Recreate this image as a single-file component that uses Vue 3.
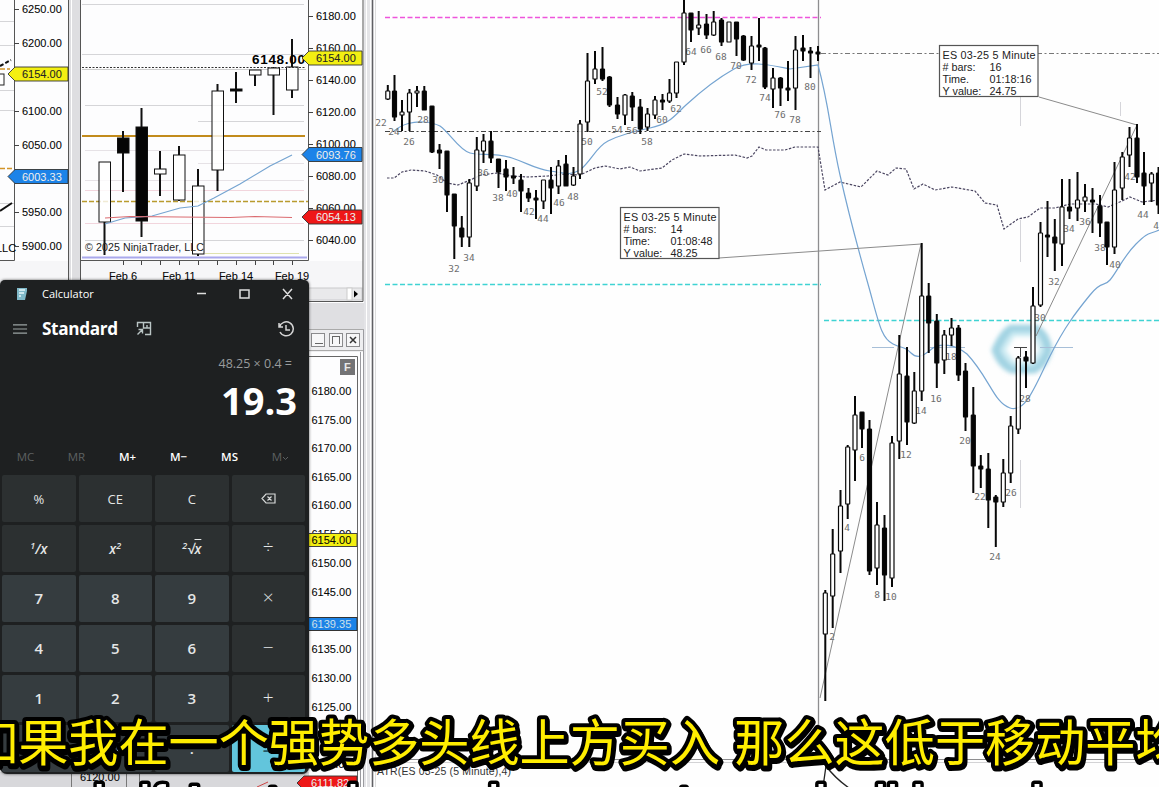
<script setup>
// x, high, body top, body bottom, low, filled
const candles = [
  [387.8,85,91,99,100,0],[394.5,75,91,117,121,1],[402,100,112,115,131,0],[409.5,89,93,112,131,0],[417,86,91,93,107,0],
  [424.3,86,91,110,110,1],[432,106,106,152,153,1],[439.5,144,150,153,169,1],[447,151,151,195,212,1],[454.3,194,194,226,259,1],
  [461.8,216,228,237,247,1],[469.3,179,183,237,247,0],[476.8,137,150,186,191,0],[483.5,134,141,151,163,0],[491,131,141,158,163,1],
  [498.5,159,159,172,188,1],[506,160,169,177,191,1],[513.5,167,176,178,184,1],[521,174,180,191,212,1],[528.5,188,193,198,202,1],
  [536,190,198,200,219,1],[543.5,180,180,201,209,0],[551,167,180,188,214,1],[558.5,160,166,186,194,0],[566,155,164,186,186,1],
  [573.5,167,176,185,186,0],[580,120,124,174,179,0],[587.5,53,81,122,132,0],[595,51,69,79,84,0],[602.5,47,69,79,81,1],
  [609.5,76,77,105,107,1],[617.5,97,105,114,119,1],[625,94,95,115,125,0],[632.3,92,96,107,121,1],[640.3,99,107,129,134,1],
  [647.5,108,114,127,131,0],[655,96,100,115,119,0],[662.5,94,100,102,110,1],[669.5,79,93,101,103,0],[676.5,62,62,93,98,0],
  [684,0,13,62,65,0],[691,13,13,30,42,1],[698.7,11,25,28,35,0],[706.5,14,24,35,39,1],[713.7,11,22,35,36,0],
  [721.5,18,20,42,46,1],[729,22,22,42,42,0],[736.5,22,22,39,56,1],[743.5,35,36,60,61,1],[751.5,36,46,63,70,0],
  [759,18,45,47,61,1],[765,47,48,87,89,1],[773,68,78,89,108,0],[780.5,77,78,88,106,1],[788,61,88,90,101,1],
  [795.5,36,50,88,110,0],[803,35,48,51,61,1],[810.5,47,51,53,78,1],[818,46,52,54,61,1],
  [825.3,590,593,634,701,0],[832.7,529,554,596,628,0],[840.5,490,506,551,573,0],[847.7,445,447,504,519,0],[855,396,415,450,481,0],
  [862,412,412,429,448,1],[869.5,420,429,571,575,1],[877,502,525,568,585,0],[884.5,515,528,575,601,1],[892,436,443,578,587,0],
  [899.3,335,374,441,459,0],[907,347,376,422,445,1],[914.3,372,391,423,424,0],[921.7,243,296,391,401,0],[928.7,283,296,323,353,1],
  [936.8,314,321,363,388,1],[944.3,330,335,360,374,0],[951.5,318,328,335,346,0],[958.5,325,328,375,381,1],[965.5,363,371,417,431,1],
  [973.3,387,415,466,493,1],[980.8,455,466,469,488,1],[988.3,453,469,500,528,1],[995.8,495,497,502,547,1],[1003.3,459,473,502,507,0],
  [1010.7,416,426,473,483,0],[1018.3,356,358,429,434,0],[1026,351,357,361,388,1],[1033,287,306,363,364,0],[1040.5,222,233,305,307,0],
  [1047.5,201,235,237,257,1],[1054.8,219,237,243,271,1],[1062,179,207,244,266,0],[1069.5,179,207,211,219,1],[1077.5,172,200,208,221,0],
  [1085,184,197,201,212,0],[1092.5,188,200,202,233,1],[1100,195,206,223,237,1],[1107,222,222,247,265,1],[1114.5,162,190,247,254,0],
  [1122.3,152,157,188,200,0],[1129.5,127,138,155,167,0],[1137,124,138,177,183,1],[1144,152,173,186,205,1],[1151.5,172,174,183,202,0],
  [1158.5,167,173,205,214,1],
]

// bar number, x, baseline
const barLabels = [
  [22,381,126],[24,394,135],[26,409,145],[28,423,123],[30,438,183],[32,454,272],[34,469,261],[36,483,176],[38,498,201],[40,512,197],
  [42,529,215],[44,543,222],[46,559,206],[48,573,200],[50,587,145],[52,602,95],[54,617,133],[56,632,134],[58,647,145],[60,662,123],
  [62,676,112],[64,691,55],[66,706,53],[68,721,60],[70,736,69],[72,751,83],[74,765,101],[76,780,118],[78,795,123],[80,810,90],
  [2,832,640],[4,847,531],[6,862,461],[8,877,598],[10,891,600],[12,906,458],[14,921,414],[16,936,402],[18,951,360],[20,965,444],
  [22,980,500],[24,995,560],[26,1011,496],[28,1025,402],[30,1040,321],[32,1054,285],[34,1069,232],[36,1085,225],[38,1100,251],[40,1115,268],
  [42,1130,180],[44,1143,218],[46,1159,229],
]

const daily = [
  [104.5,162,162,222,255,0],[123,131,138,153,192,1],[141.5,108,127,221,237,1],[160,151,169,174,196,0],[179,146,155,200,201,0],
  [198,169,186,254,256,0],[217.5,84,91,170,191,0],[236,72,89,91,103,1],[255,70,70,75,86,0],[273.5,67,68,75,115,0],[292,39,67,90,98,0],
]

const axisLeft = [['6250.00',9],['6200.00',43],['6100.00',111],['6050.00',145],['5950.00',212],['5900.00',246]]
const axisMid = [['6180.00',16],['6160.00',48],['6140.00',80],['6120.00',112],['6100.00',144],['6080.00',176],['6060.00',208],['6040.00',240]]
const axisLow = [['6180.00',391],['6175.00',420],['6170.00',448],['6165.00',477],['6160.00',505],['6155.00',534],['6150.00',563],['6145.00',592],['6135.00',649],['6130.00',678],['6125.00',707],['6120.00',735],['6115.00',764]]
const dates = [['Feb 6',123],['Feb 11',179],['Feb 14',236],['Feb 19',292]]

const tags = [
  { x: 8, y: 74, w: 60, t: '6154.00', bg: '#f3ef12', fg: '#222' },
  { x: 8, y: 176.5, w: 60, t: '6003.33', bg: '#1c83e8', fg: '#fff' },
  { x: 302, y: 58, w: 60, t: '6154.00', bg: '#f3ef12', fg: '#222' },
  { x: 302, y: 154.5, w: 60, t: '6093.76', bg: '#1c83e8', fg: '#fff' },
  { x: 302, y: 217, w: 60, t: '6054.13', bg: '#ee1717', fg: '#fff' },
  { x: 297, y: 783, w: 60, t: '6111.82', bg: '#ee1717', fg: '#fff' },
]
const tagShape = (g) => `M${g.x} ${g.y}L${g.x + 7} ${g.y - 7}H${g.x + g.w}V${g.y + 7}H${g.x + 7}Z`

const notes = [
  { x: 620.5, y: 207.5, h: 51, rows: [['# bars:', '14'], ['Time:', '01:08:48'], ['Y value:', '48.25']] },
  { x: 939.5, y: 45.5, h: 51, rows: [['# bars:', '16'], ['Time.', '01:18:16'], ['Y value:', '24.75']] },
]

const memory = [['MC', 0], ['MR', 0], ['M+', 1], ['M−', 1], ['MS', 1], ['M﹀', 0]]
const keys = [
  ['%','fn'],['CE','fn'],['C','fn'],['back','fn'],
  ['recip','fn'],['sq','fn'],['root','fn'],['÷','fn op'],
  ['7','num'],['8','num'],['9','num'],['×','fn op'],
  ['4','num'],['5','num'],['6','num'],['−','fn op'],
  ['1','num'],['2','num'],['3','num'],['+','fn op'],
  ['','num'],['0','num'],['.','num'],['=','eq'],
]

// second caption line, running past the lower edge
const caption = [['again',4],['if',139],['I',187],['set',209],['buy',347],['above',458],['a',621],['strong',650],['bull',815],['bars',912],['be',1031]]
</script>

<template>
  <main class="desk">
    <section class="left">
      <svg class="pane" viewBox="0 0 370 787">
        <rect width="370" height="787" fill="#fdfdfe" />
        <rect y="261" width="363" height="40" fill="#f6f6f8" />
        <g stroke="#d5d5d8">
          <path d="M0 21.5H14M0 45.5H14M0 90.5H14M0 110.5H14M0 203.5H14M0 226.5H14M82 4.5H304M82 54.5H304M85 105.5H304M198 121.5H304M85 240.5H304" />
          <path d="M85 150.500H304M198 163.500H304M85 180.500H304" stroke="#e6e2e6" />
          <path d="M85 190.500H304M85 223.500H304" stroke="#f2d5dd" />
          <path d="M205 253.500H299" stroke="#dfe2ae" />
        </g>
        <path d="M82 257.500H307" stroke="#a9a8ec" stroke-width="2" />
        <path d="M14.500 0V260.500H0M308.500 0V260.500H80" stroke="#555" fill="none" />
        <rect x="69" y="0" width="11" height="281" fill="#dedee1" />
        <path d="M68.500 0V281M80.500 0V281" stroke="#555" />
        <path d="M71.500 0V281" stroke="#fff" />
        <path d="M0 66L11 60" stroke="#111" stroke-width="2" stroke-dasharray="4 2" />
        <path d="M0 69H10M0 168.500H12" stroke="#d29428" stroke-width="1.500" stroke-dasharray="5 2" />
        <rect x="-3" y="74" width="7" height="11" fill="#fff" stroke="#222" />
        <path d="M0 211L12 203" stroke="#111" stroke-width="2" />
        <text x="-4" y="252" class="price">LLC</text>

        <path d="M82 136H305" stroke="#c28b1c" stroke-width="2" />
        <path d="M82 201.500H308" stroke="#b99b2e" stroke-width="1.500" stroke-dasharray="5 2" />
        <path d="M82 69.500H306" stroke="#ccc" />
        <g v-for="c in daily" :key="c[0]">
          <path :d="`M${c[0]} ${c[1]}V${c[2]}M${c[0]} ${c[3]}V${c[4]}`" stroke="#111" stroke-width="2" />
          <rect :x="c[0] - 5.500" :y="c[2]" width="11.500" :height="Math.max(c[3] - c[2], 1)" :fill="c[5] ? '#050505' : '#fff'" :fill-opacity="c[5] ? 1 : .8" stroke="#111" />
        </g>
        <path d="M82 67.500H306" stroke="#333" stroke-dasharray="2 1.500" />
        <text x="85" y="251" class="copy" textLength="119">© 2025 NinjaTrader, LLC</text>
        <path d="M105 224L125 218 152 216 180 208 198 206 214 198 240 184 270 166 292 155" class="ma" />
        <path d="M105 218L130 216.500 230 217.500 255 216.500 292 217.500" fill="none" stroke="#db6b70" stroke-width="1.200" />
        <text x="252" y="64" class="last" textLength="53">6148.00</text>

        <g v-for="a in axisLeft" :key="'l' + a[0]">
          <path :d="`M14 ${a[1]}.5h5`" stroke="#444" />
          <text x="22" :y="a[1] + 4" class="price">{{ a[0] }}</text>
        </g>
        <g v-for="a in axisMid" :key="'m' + a[0]">
          <path :d="`M308 ${a[1]}.5h5`" stroke="#444" />
          <text x="316" :y="a[1] + 4" class="price">{{ a[0] }}</text>
        </g>
        <path d="M123.500 261v4M141.500 261v4M160.500 261v4M179.500 261v4M198.500 261v4M217.500 261v4M236.500 261v4M255.500 261v4M273.500 261v4M292.500 261v4" stroke="#444" />
        <text v-for="d in dates" :key="d[0]" :x="d[1]" y="280" text-anchor="middle" class="price">{{ d[0] }}</text>

        <rect x="300" y="288" width="62" height="12" fill="#e9e9eb" stroke="#c9c9cc" />
        <rect x="347" y="288" width="5" height="12" fill="#fff" stroke="#ccc" />
        <path d="M354 290.500l4 3.500-4 3.500z" fill="#000" />
        <path d="M300 301.500H363V0" fill="none" stroke="#555" />
        <rect x="300" y="303" width="70" height="27" fill="#dfdfe2" />
        <rect x="364" y="0" width="6" height="787" fill="#e4e4e7" />
        <path d="M366.500 0V787" stroke="#fff" />
        <rect x="300" y="330" width="63" height="22" fill="#eeeef0" />
        <path d="M300 329.500H364M300 350.500H364" stroke="#aaa" />
        <g fill="#f7f7f8" stroke="#8b8b8d">
          <rect x="311.500" y="333.500" width="13" height="13" /><rect x="329.500" y="333.500" width="13" height="13" /><rect x="346.500" y="333.500" width="13" height="13" />
        </g>
        <path d="M315 343.500h8M332 336.500h8M332.500 336v8M339.500 336v8" stroke="#666" />
        <path d="M350 337l6 6M356 337l-6 6" stroke="#333" stroke-width="1.500" />
        <path d="M300 356.500H357.500V787" fill="none" stroke="#666" />
        <path d="M360.500 352V787M363.500 330V787" stroke="#9b9ba0" />
        <rect x="340" y="359" width="15" height="16" fill="#737375" /><text x="344" y="371" class="fbtn">F</text>
        <text v-for="a in axisLow" :key="'b' + a[0]" x="311.500" :y="a[1] + 4" class="price">{{ a[0] }}</text>
        <rect x="305" y="533.500" width="52" height="13" fill="#f3ef12" stroke="#444" /><text x="311.500" y="544" class="price">6154.00</text>
        <rect x="305" y="617.500" width="52" height="13" fill="#1c83e8" stroke="#333" /><text x="311.500" y="628" class="price pale">6139.35</text>

        <rect y="772" width="309" height="15" fill="#d8d8db" />
        <path d="M71.500 774V787M126.500 774V787M139.500 774V787" stroke="#777" />
        <text x="80" y="781" class="price">6120.00</text>
        <path d="M257 787L268 782" stroke="#c44" />
        <g v-for="g in tags" :key="g.x + '-' + g.y">
          <path :d="tagShape(g)" :fill="g.bg" stroke="#333" stroke-width=".9" />
          <text :x="g.x + 14" :y="g.y + 4" class="price" :fill="g.fg">{{ g.t }}</text>
        </g>
      </svg>
    </section>

    <section class="right">
      <svg class="pane" viewBox="370 0 789 787">
        <defs><filter id="soft" x="-20%" y="-20%" width="140%" height="140%"><feGaussianBlur stdDeviation="2" /></filter></defs>
        <rect x="370" width="789" height="787" fill="#fefefe" />
        <path d="M372.500 0V787" stroke="#606064" stroke-width="1.600" /><path d="M375.500 0V787" stroke="#ddd" />
        <path d="M818.500 0V760" stroke="#8e8e90" stroke-width="1.300" />
        <path d="M373 759.500H1159" stroke="#8e8e90" /><path d="M373 762.500H1159" stroke="#d3d3d5" />
        <path d="M385 17.500H821" stroke="#ee55dc" stroke-width="1.400" stroke-dasharray="5 2.500" />
        <path d="M385 131.500H821" stroke="#444" stroke-width="1.200" stroke-dasharray="5 2.500 2 2.500" />
        <path d="M385 284.500H821M824 320.500H1159" stroke="#3fd3d3" stroke-width="1.400" stroke-dasharray="5 2.500" />
        <path d="M821 53.500H1159" stroke="#777" stroke-width="1.200" stroke-dasharray="5 2.500 2 2.500" />
        <path d="M1020.500 80V126M1020.500 220V262M1020.500 460V508M1120.500 102V116" stroke="#d5d5da" />

        <g fill="none" stroke-linejoin="round" filter="url(#soft)">
          <path d="M996 350Q1003 334 1011 329H1036Q1046 335 1048 350 1044 364 1034 369H1012Q1001 364 996 350Z" stroke="#8cc9dc" stroke-width="9" opacity=".8" />
          <path d="M1003 350L1013 334H1034L1042 350 1032 364H1013Z" stroke="#c3e8f1" stroke-width="5" opacity=".8" />
        </g>
        <path d="M872 347.500H894M930 347.500H965M1040 347.500H1073" stroke="#a7bfd8" />

        <path d="M387 178L394 178 402 172 411 170 425 171 437 175 447 183 458 185 468 181 481 175 497 173 512 176 528 177 548 176 565 174 580 175 595 168 605 166 620 169 630 167 640 171 662 168 672 160 684 154 700 156 735 155 747 158 752 156 759 147 766 150 785 150 795 147 818 147 825 190 840 182 861 187 877 171 888 175 896 168 906 169 914 189 923 184 935 190 952 187 975 191 985 203 997 205 1004 229 1018 219 1028 217 1040 208 1055 208 1070 204 1096 204 1108 207 1122 201 1130 197 1142 202 1159 200" fill="none" stroke="#4b4661" stroke-width="1.200" stroke-dasharray="2.500 1.500" />
        <path d="M394 131C402 124 414 121 424 122S436 124 440 126C450 133 459 150 470 153S494 152 512 158 535 169 550 171 569 176 580 170C592 160 596 147 608 141S630 132 650 128 674 116 686 105 718 78 734 69 770 65 790 69L818 65C829 105 830 130 840 175S857 245 868 284 881 338 893 344 903 345 911 353 926 353 933 348 955 344 967 354C989 377 994 403 1010 408S1035 386 1050 356 1077 311 1090 295 1103 288 1110 280 1123 257 1136 244 1148 235 1159 230" class="ma" />

        <path d="M719 258L921 244 820 698M1039 97L1137 125 1036 336" fill="none" stroke="#8b8b8b" />
        <text v-for="l in barLabels" :key="l[1] + '-' + l[2]" :x="l[1]" :y="l[2]" text-anchor="middle" class="bar">{{ l[0] }}</text>
        <g v-for="c in candles" :key="c[0]">
          <path :d="`M${c[0]} ${c[1]}V${c[2]}M${c[0]} ${c[3]}V${c[4]}`" stroke="#080808" stroke-width="2" />
          <rect :x="c[0] - 2" :y="c[2]" width="4" :height="Math.max(c[3] - c[2], 1)" rx=".6" :fill="c[5] ? '#050505' : '#fff'" :fill-opacity="c[5] ? 1 : .85" stroke="#080808" stroke-width="1.200" />
        </g>
        <path d="M1014 347.500H1027M1020.500 348V357" stroke="#444" />

        <g v-for="n in notes" :key="n.x">
          <rect :x="n.x" :y="n.y" width="98.500" :height="n.h" fill="#fff" stroke="#555" stroke-width="1.200" />
          <text :x="n.x + 3" :y="n.y + 13.500" class="note" textLength="93">ES 03-25 5 Minute</text>
          <g v-for="(r, i) in n.rows" :key="r[0]">
            <text :x="n.x + 3" :y="n.y + 25.500 + i * 12" class="note">{{ r[0] }}</text>
            <text :x="n.x + 50" :y="n.y + 25.500 + i * 12" class="note">{{ r[1] }}</text>
          </g>
        </g>
        <text x="377" y="774.500" class="atr" textLength="134">ATR(ES 03-25 (5 Minute),4)</text>
        <path d="M823 787L826 766C832 774 839 781 849 788" fill="none" stroke="#222" stroke-width="1.300" />
      </svg>
    </section>

    <section class="calc">
      <header class="titlebar">
        <svg class="app" viewBox="0 0 12 14"><path d="M1 1h10v3L9 13H1z" fill="#80b9c9" /><path d="M3 3h6M3 6h5M3 9h2" stroke="#e8f7fb" stroke-width="1.500" /></svg>
        <span>Calculator</span>
        <svg class="winctl" viewBox="0 0 100 12"><path d="M3 5.500h9M46 2h9v8h-9zM89 1l9 10M98 1l-9 10" fill="none" stroke="#dedede" stroke-width="1.500" /></svg>
      </header>
      <div class="mode">
        <svg class="burger" viewBox="0 0 16 12"><path d="M0 1.500h15M0 6h15M0 10.500h15" stroke="#9ba3a3" stroke-width="1.300" /></svg>
        <b>Standard</b>
        <svg class="pin" viewBox="0 0 16 15"><path d="M1.500 6V1.500h13v12H9M7.500 2v5h3.500V4M11 7h3M1.500 13.500L6 9M2.500 8.500h4v4" fill="none" stroke="#bac5c5" stroke-width="1.400" /></svg>
        <svg class="history" viewBox="0 0 18 16"><path d="M2 2v4h4M2.500 6A7 7 0 1 1 3 11M9 4v5h4" fill="none" stroke="#d5d5d5" stroke-width="1.500" /></svg>
      </div>
      <div class="expr">48.25 × 0.4 =</div>
      <div class="result">19.3</div>
      <div class="memory">
        <span v-for="m in memory" :key="m[0]" :class="{ dim: !m[1] }">
          <template v-if="m[0] === 'M﹀'">M<svg class="chev" viewBox="0 0 7 5"><path d="M1 1l2.500 2.500L6 1" fill="none" stroke="currentColor" /></svg></template>
          <template v-else>{{ m[0] }}</template>
        </span>
      </div>
      <div class="keys">
        <div v-for="(k, i) in keys" :key="i" class="key" :class="k[1]">
          <svg v-if="k[0] === 'back'" class="back" viewBox="0 0 15 11"><path d="M5 1h9v9H5L1 5.500zM6.500 3.500l4 4M10.500 3.500l-4 4" fill="none" stroke="#d7d9d9" stroke-width="1.200" /></svg>
          <i v-else-if="k[0] === 'recip'"><sup>1</sup>/x</i>
          <i v-else-if="k[0] === 'sq'">x<sup>2</sup></i>
          <i v-else-if="k[0] === 'root'" class="root"><sup>2</sup>√<u>x</u></i>
          <template v-else>{{ k[0] }}</template>
        </div>
      </div>
    </section>

    <svg class="captions" viewBox="0 0 1159 787">
      <g class="en"><text v-for="w in caption" :key="w[1]" :x="w[1]" y="823">{{ w[0] }}</text></g>
      <text class="zh" x="-32" y="761">如果我在一个强势多头线上方买入 那么这低于移动平均</text>
    </svg>
  </main>
</template>

<style>
body { overflow: hidden; }
</style>

<style scoped>
.desk { position: relative; display: grid; grid-template-columns: 370px 789px; width: 1159px; height: 787px; overflow: hidden; background: #fff; font-family: "Liberation Sans", sans-serif; }
.pane { display: block; width: 100%; height: 787px; }
.price { font: 11px "Liberation Sans", sans-serif; stroke: #3336; stroke-width: .2px; }
.pale { fill: #d9f1ff; }
.copy { font: 10.600px "Liberation Sans", sans-serif; fill: #222; }
.last { font: bold 13.500px "Liberation Sans", sans-serif; }
.fbtn { font: bold 11px "Liberation Sans", sans-serif; fill: #e8e8e8; }
.ma { fill: none; stroke: #75a4d1; stroke-width: 1.200px; }
.bar { font: 9.500px "DejaVu Sans Mono", monospace; fill: #6d6d6d; }
.note { font: 10.800px "Liberation Sans", sans-serif; fill: #222; }
.atr { font: 10.500px "Liberation Sans", sans-serif; fill: #333; }

.calc { position: absolute; left: 0; top: 280px; width: 309px; height: 494px; box-sizing: border-box; padding: 0 3px 0 2px; display: flex; flex-direction: column; background: #1e2021; border-radius: 5px 5px 7px 7px; box-shadow: 0 0 3px #000a; color: #fff; font-family: "Open Sans", "Noto Sans", sans-serif; }
.titlebar { height: 27px; display: flex; align-items: center; padding: 0 12px 0 14px; font-size: 11px; font-weight: 500; }
.app { width: 12px; height: 14px; margin-right: 14px; }
.winctl { width: 100px; height: 12px; margin-left: auto; }
.mode { height: 43px; display: flex; align-items: center; padding: 0 11px 0 11px; font-size: 17.200px; }
.mode b { font-weight: 700; letter-spacing: -.35px; }
.burger { width: 15px; height: 12px; margin-right: 14px; }
.pin { width: 16px; height: 15px; margin-left: 18px; }
.history { width: 18px; height: 16px; margin-left: auto; }
.expr { height: 26px; line-height: 27px; text-align: right; padding-right: 14px; font-size: 12.500px; color: #999c9d; }
.result { height: 54px; line-height: 49px; text-align: right; padding-right: 9px; font-size: 38px; font-weight: 700; }
.memory { height: 43px; box-sizing: border-box; padding-top: 12px; display: grid; grid-template-columns: repeat(6, 51px); font-size: 11.500px; line-height: 30px; text-align: center; font-weight: 600; }
.memory span { padding-right: 4px; height: 30px; }
.dim { color: #5d6061; font-weight: 400; }
.chev { width: 7px; height: 5px; }
.keys { display: grid; grid-template-columns: repeat(4, 73.5px); grid-template-rows: repeat(6, 47px); gap: 3px; margin-top: 2px; }
.key { display: flex; align-items: center; justify-content: center; border-radius: 2px; font-size: 14px; font-weight: 600; color: #e4e6e6; }
.fn { background: #2c3031; font-size: 13px; font-weight: 500; }
.num { background: #353c3f; font-size: 15px; padding-bottom: 1px; height: 46px; }
.op { font-size: 19px; font-weight: 300; padding-bottom: 3px; height: 44px; }
.eq { background: #62c5dc; color: #245766; font-size: 20px; }
.key i { font-size: 13.500px; font-weight: 600; }
.key sup { font-size: 9px; line-height: 0; }
.root u { text-decoration: overline; }
.back { width: 15px; height: 11px; }

.captions { position: absolute; inset: 0; width: 1159px; height: 787px; }
.zh { font: 50.150px "Noto Sans CJK SC", sans-serif; fill: #ffed00; stroke: #000; stroke-width: 8px; stroke-linejoin: round; paint-order: stroke; word-spacing: 3px; filter: drop-shadow(1px 2px 0 #000); }
.en { font: 53.500px "Liberation Sans", sans-serif; fill: #fff; stroke: #000; stroke-width: 7px; stroke-linejoin: round; paint-order: stroke; }
</style>
